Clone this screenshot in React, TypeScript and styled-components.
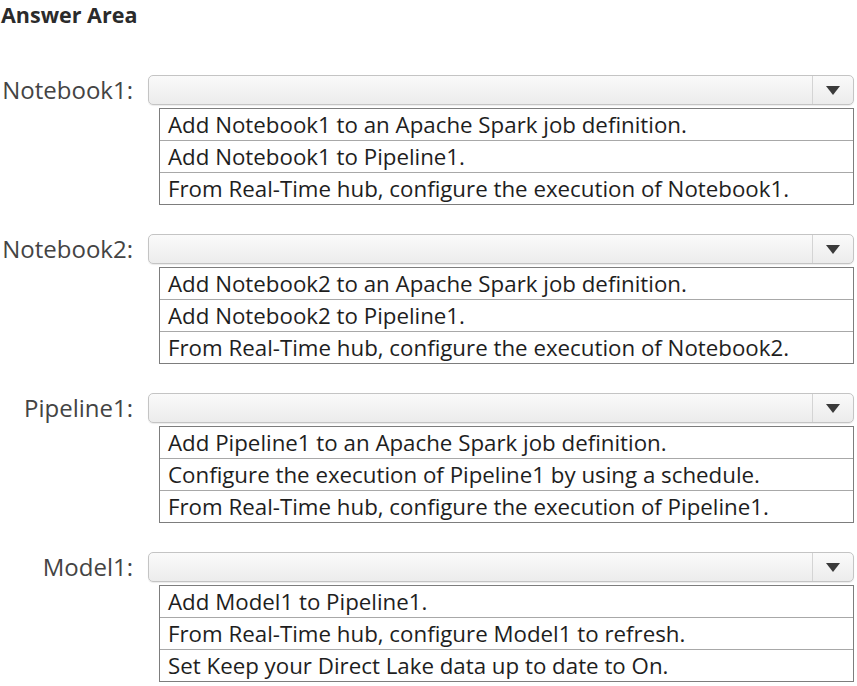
import React from 'react';
import styled, { createGlobalStyle } from 'styled-components';

const GlobalStyle = createGlobalStyle`
  body {
    margin: 0;
    background: #ffffff;
    font-family: 'Open Sans', 'Noto Sans', sans-serif;
  }
`;

const Page = styled.div`
  width: 857px;
  height: 686px;
  overflow: hidden;
  background: #ffffff;
`;

const Title = styled.div`
  padding: 0 0 0 1px;
  height: 75px;
  font-size: 21.5px;
  font-weight: 700;
  line-height: 29px;
  color: #2b2b2b;
`;

const Section = styled.div`
  display: grid;
  grid-template-columns: 148px 706px;
  grid-template-rows: 30px auto;
  row-gap: 3px;
  margin-bottom: 29px;
`;

const Label = styled.div`
  display: flex;
  align-items: center;
  justify-content: flex-end;
  padding-right: 15px;
  font-size: 24px;
  line-height: 30px;
  color: #444444;
  white-space: nowrap;
`;

const Dropdown = styled.div`
  display: flex;
  height: 30px;
  box-sizing: border-box;
  border: 1px solid #c4c4c4;
  border-radius: 5px;
  background: linear-gradient(#fafafa, #ececec);
  box-shadow: 0 1px 1px rgba(0, 0, 0, 0.08);
`;

const Field = styled.div`
  flex: 1;
`;

const ArrowButton = styled.div`
  width: 40px;
  display: grid;
  place-items: center;
  border-left: 1px solid #d4d4d4;
`;

const Options = styled.div`
  grid-column: 2;
  margin-left: 11px;
  width: 695px;
  box-sizing: border-box;
  border: 1px solid #7d7d7d;
`;

const Option = styled.div`
  height: 32px;
  box-sizing: border-box;
  padding-left: 8px;
  display: flex;
  align-items: center;
  font-size: 22.3px;
  line-height: 30px;
  color: #1e1e1e;
  white-space: nowrap;
  border-top: 1px solid #a8a8a8;

  &:first-child {
    border-top: none;
    height: 31px;
  }
`;

const questions = [
  {
    label: 'Notebook1:',
    options: [
      'Add Notebook1 to an Apache Spark job definition.',
      'Add Notebook1 to Pipeline1.',
      'From Real-Time hub, configure the execution of Notebook1.',
    ],
  },
  {
    label: 'Notebook2:',
    options: [
      'Add Notebook2 to an Apache Spark job definition.',
      'Add Notebook2 to Pipeline1.',
      'From Real-Time hub, configure the execution of Notebook2.',
    ],
  },
  {
    label: 'Pipeline1:',
    options: [
      'Add Pipeline1 to an Apache Spark job definition.',
      'Configure the execution of Pipeline1 by using a schedule.',
      'From Real-Time hub, configure the execution of Pipeline1.',
    ],
  },
  {
    label: 'Model1:',
    options: [
      'Add Model1 to Pipeline1.',
      'From Real-Time hub, configure Model1 to refresh.',
      'Set Keep your Direct Lake data up to date to On.',
    ],
  },
];

function App() {
  return (
    <Page>
      <GlobalStyle />
      <Title>Answer Area</Title>
      {questions.map((q) => (
        <Section key={q.label}>
          <Label>{q.label}</Label>
          <Dropdown>
            <Field />
            <ArrowButton>
              <svg width="14" height="9" viewBox="0 0 14 9">
                <path d="M0 0 H14 L7 9 Z" fill="#3a3a3a" />
              </svg>
            </ArrowButton>
          </Dropdown>
          <Options>
            {q.options.map((o) => (
              <Option key={o}>{o}</Option>
            ))}
          </Options>
        </Section>
      ))}
    </Page>
  );
}

export default App;
